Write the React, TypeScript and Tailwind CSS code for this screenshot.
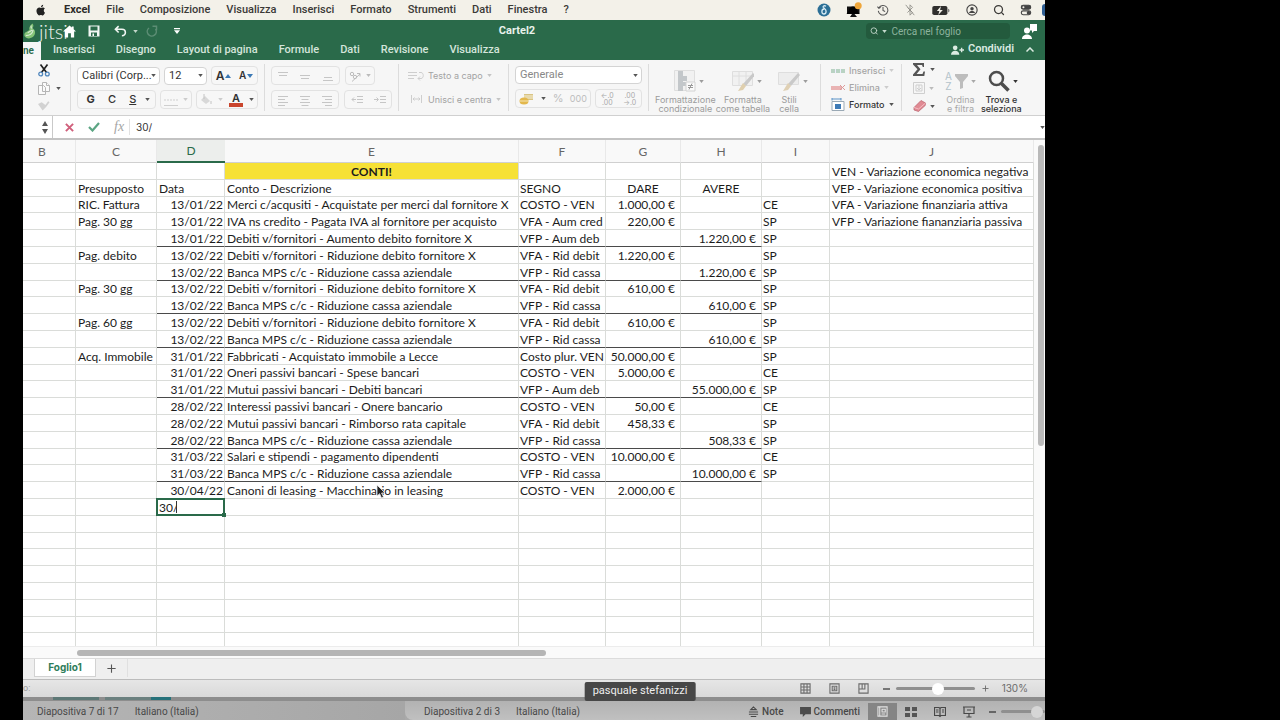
import type { ReactNode } from "react";
import { Search } from "lucide-react";

type Cells = [string, string, string, string, string, string, string, string];

const ROWS: Cells[] = [
  ["", "", "CONTI!", "", "", "", "", "VEN - Variazione economica negativa"],
  ["Presupposto", "Data", "Conto - Descrizione", "SEGNO", "DARE", "AVERE", "", "VEP - Variazione economica positiva"],
  ["RIC. Fattura", "13/01/22", "Merci c/acqusiti - Acquistate per merci dal fornitore X", "COSTO - VEN", "1.000,00 €", "", "CE", "VFA - Variazione finanziaria attiva"],
  ["Pag. 30 gg", "13/01/22", "IVA ns credito - Pagata IVA al fornitore per acquisto", "VFA - Aum cred", "220,00 €", "", "SP", "VFP - Variazione fiananziaria passiva"],
  ["", "13/01/22", "Debiti v/fornitori - Aumento debito fornitore X", "VFP - Aum deb", "", "1.220,00 €", "SP", ""],
  ["Pag. debito", "13/02/22", "Debiti v/fornitori - Riduzione debito fornitore X", "VFA - Rid debit", "1.220,00 €", "", "SP", ""],
  ["", "13/02/22", "Banca MPS c/c - Riduzione cassa aziendale", "VFP - Rid cassa", "", "1.220,00 €", "SP", ""],
  ["Pag. 30 gg", "13/02/22", "Debiti v/fornitori - Riduzione debito fornitore X", "VFA - Rid debit", "610,00 €", "", "SP", ""],
  ["", "13/02/22", "Banca MPS c/c - Riduzione cassa aziendale", "VFP - Rid cassa", "", "610,00 €", "SP", ""],
  ["Pag. 60 gg", "13/02/22", "Debiti v/fornitori - Riduzione debito fornitore X", "VFA - Rid debit", "610,00 €", "", "SP", ""],
  ["", "13/02/22", "Banca MPS c/c - Riduzione cassa aziendale", "VFP - Rid cassa", "", "610,00 €", "SP", ""],
  ["Acq. Immobile", "31/01/22", "Fabbricati - Acquistato immobile a Lecce", "Costo plur. VEN", "50.000,00 €", "", "SP", ""],
  ["", "31/01/22", "Oneri passivi bancari - Spese bancari", "COSTO - VEN", "5.000,00 €", "", "CE", ""],
  ["", "31/01/22", "Mutui passivi bancari - Debiti bancari", "VFP - Aum deb", "", "55.000,00 €", "SP", ""],
  ["", "28/02/22", "Interessi passivi bancari - Onere bancario", "COSTO - VEN", "50,00 €", "", "CE", ""],
  ["", "28/02/22", "Mutui passivi bancari - Rimborso rata capitale", "VFA - Rid debit", "458,33 €", "", "SP", ""],
  ["", "28/02/22", "Banca MPS c/c - Riduzione cassa aziendale", "VFP - Rid cassa", "", "508,33 €", "SP", ""],
  ["", "31/03/22", "Salari e stipendi - pagamento dipendenti", "COSTO - VEN", "10.000,00 €", "", "CE", ""],
  ["", "31/03/22", "Banca MPS c/c - Riduzione cassa aziendale", "VFP - Rid cassa", "", "10.000,00 €", "SP", ""],
  ["", "30/04/22", "Canoni di leasing - Macchinario in leasing", "COSTO - VEN", "2.000,00 €", "", "", ""],
];
const RULED = new Set([4, 6, 8, 10, 13, 16, 18]);
const EMPTY: Cells = ["", "", "", "", "", "", "", ""];
const ALL_ROWS: Cells[] = [...ROWS, ...Array.from({ length: 9 }, () => EMPTY)];
const ACTIVE_ROW = 20;
const POINTER_ROW = 19;

function Caret({ className = "text-[#555]" }: { className?: string }) {
  return (
    <svg viewBox="0 0 6 4" className={`h-[3px] w-[5px] shrink-0 ${className}`} aria-hidden="true">
      <path d="M0 0h6L3 4z" fill="currentColor" />
    </svg>
  );
}

function Picker({ label, value, className }: { label: string; value: string; className: string }) {
  return (
    <label className={`relative flex h-[18px] items-center rounded-sm border border-[#d4d4d4] bg-white font-[Roboto,sans-serif] ${className}`}>
      <select aria-label={label} className="h-full w-full appearance-none bg-transparent pl-1 outline-none">
        <option>{value}</option>
      </select>
      <span className="pointer-events-none absolute right-[3px]">
        <Caret />
      </span>
    </label>
  );
}

function Box({ children, className = "" }: { children: ReactNode; className?: string }) {
  return (
    <div className={`flex h-[19px] items-center justify-around rounded-sm border border-[#e2e2e2] bg-[#f7f7f7] ${className}`}>
      {children}
    </div>
  );
}

function IconButton({ label, children, className = "" }: { label: string; children: ReactNode; className?: string }) {
  return (
    <button type="button" aria-label={label} className={`flex items-center justify-center ${className}`}>
      {children}
    </button>
  );
}

function Lines({ d }: { d: string }) {
  return (
    <svg viewBox="0 0 12 12" className="size-3 text-[#c6c6c6]" fill="none" stroke="currentColor" aria-hidden="true">
      <path d={d} />
    </svg>
  );
}

function Separator() {
  return <div className="my-1 w-px shrink-0 bg-[#dcdcdc]" />;
}

function MacBar() {
  const menus = ["File", "Composizione", "Visualizza", "Inserisci", "Formato", "Strumenti", "Dati", "Finestra", "?"];
  return (
    <div className="flex h-5 shrink-0 items-center overflow-hidden bg-[#f3f1e9] pl-3 text-[11px] text-[#3b3a37]">
      <svg viewBox="0 0 24 24" className="mr-[17px] size-3 shrink-0 fill-[#222]" role="img" aria-label="Apple">
        <path d="M17.6 12.8c0-2.6 2.100-3.900 2.200-3.900-1.200-1.800-3.100-2-3.700-2-1.600-.2-3.100.9-3.900.9s-2-.9-3.300-.9C5.500 7 2.900 9.400 2.900 13.400c0 2.400.9 5 2.100 6.700 1.100 1.600 2 2.900 3.400 2.900 1.300-.1 1.800-.9 3.400-.9 1.600 0 2.100.9 3.500.9 1.400 0 2.300-1.300 3.300-2.800 1-1.500 1.400-3 1.400-3.100-.1 0-2.400-1-2.400-4.300zM15.200 5c.7-.9 1.200-2.100 1.100-3.400-1.100.1-2.300.7-3.100 1.600-.7.800-1.300 2-1.100 3.200 1.200.1 2.400-.6 3.100-1.400z" />
      </svg>
      <nav className="flex items-center gap-4 font-medium">
        <button type="button" className="font-bold text-[#2c2b29]">Excel</button>
        {menus.map((m) => (
          <button type="button" key={m}>{m}</button>
        ))}
      </nav>
      <div className="ml-auto flex items-center gap-[15px]">
        <svg viewBox="0 0 14 14" className="size-[14px]" aria-hidden="true">
          <circle cx="7" cy="7" r="6.500" fill="#2b6f96" />
          <path d="M9 3.200C7.500 2.200 5.700 3 6.200 4.300c.5 1 2.900 1.800 2.900 4C9.100 9.900 8.200 11 7 11S4.900 9.900 4.900 8.500 5.900 6 7.200 6" fill="none" stroke="#d7ecf5" strokeWidth="1.300" />
        </svg>
        <svg viewBox="0 0 16 16" className="size-4" aria-hidden="true">
          <path d="M1 4.500h12.500V12H1zM6 12h2.500l2.500 3H4z" fill="#111" />
          <path d="M.5 12C3 10 2.500 4.500 7 4.500s4 5.500 6.500 7.500z" fill="#000" />
          <circle cx="12.200" cy="3.800" r="3.500" fill="#efa63a" />
        </svg>
        <svg viewBox="0 0 14 14" className="size-3 text-[#555]" fill="none" stroke="currentColor" strokeWidth="1.200" aria-hidden="true">
          <path d="M2.200 4.500A5.600 5.600 0 1 1 1.500 8M.5 3l1.700 2 2-1.200M7 3.500V7.500l2.500 1.200" />
        </svg>
        <svg viewBox="0 0 14 14" className="size-3 text-[#8d8c87]" fill="none" stroke="currentColor" aria-hidden="true">
          <path d="M4 4l6 6-3 3V1l3 3-6 6M2 1l10 12" />
        </svg>
        <svg viewBox="0 0 20 12" className="h-[11px] w-5" aria-hidden="true">
          <rect x=".5" y="1" width="16.500" height="10" rx="2" fill="#2f2f2d" />
          <path d="M18 4v4c1.500-.3 1.500-3.700 0-4z" fill="#555" />
          <path d="M10 1L5.500 6.500h2.700L7 11l5-5.500H9z" fill="#f3f1e9" />
        </svg>
        <svg viewBox="0 0 14 14" className="size-3 text-[#444]" fill="none" stroke="currentColor" strokeWidth="1.300" aria-hidden="true">
          <circle cx="7" cy="7" r="6" />
          <circle cx="7" cy="5.500" r="2" fill="currentColor" stroke="none" />
          <path d="M3.500 10.500c.5-3 6.500-3 7 0z" fill="currentColor" stroke="none" />
        </svg>
        <Search className="size-3 text-[#3b3a37]" strokeWidth={2.500} />
        <svg viewBox="0 0 14 14" className="size-3 text-[#444]" fill="none" stroke="currentColor" strokeWidth="1.300" aria-hidden="true">
          <rect x="1.500" y="1.500" width="11" height="4.500" rx="2.200" fill="currentColor" />
          <circle cx="4" cy="3.700" r="1.200" fill="#f3f1e9" stroke="none" />
          <rect x="1.500" y="8" width="11" height="4.500" rx="2.200" />
          <circle cx="10" cy="10.200" r="1.500" fill="currentColor" />
        </svg>
        <span className="-ml-[5px] h-3 w-[3px] rounded-l-full bg-[#2f5f94]" />
      </div>
    </div>
  );
}

function TitleBar() {
  const tabs = ["Inserisci", "Disegno", "Layout di pagina", "Formule", "Dati", "Revisione", "Visualizza"];
  return (
    <header className="shrink-0 bg-[#2a6a4a] text-white">
      <div className="grid h-[22px] grid-cols-[14fr_auto_15fr] items-center">
        <div className="flex items-center pl-10">
          <svg viewBox="0 0 14 14" className="mr-3 size-[13px]" aria-hidden="true">
            <path d="M7 .5L0 7h2v6.500h3.500V9h3v4.500H12V7h2l-2.500-2.400V1.500h-2v1.300z" fill="#fff" />
          </svg>
          <svg viewBox="0 0 12 12" className="mr-[14px] size-3" aria-hidden="true">
            <path d="M.5.5h11v11H.5z" fill="#f2f7f4" />
            <path d="M2.500 1.500h7v4h-7zM3 7.500h6V11H3z" fill="#2a6a4a" />
            <path d="M4.500 8.500h1.500V11H4.500z" fill="#fff" />
          </svg>
          <svg viewBox="0 0 14 12" className="mr-[6px] h-3 w-[13px]" fill="none" stroke="#f2f7f4" strokeWidth="1.700" aria-hidden="true">
            <path d="M5 .8L1.500 4.200 5 7.600M2 4.200h6.500c5 0 5 7 0 7" />
          </svg>
          <Caret className="text-[#c2d6ca]" />
          <svg viewBox="0 0 12 12" className="mr-4 ml-2 size-3" fill="none" stroke="#5c8d74" strokeWidth="1.500" aria-hidden="true">
            <path d="M3 3a4.500 4.500 0 1 0 6.500 1M6.500 1.200h4v4" />
          </svg>
          <svg viewBox="0 0 6 6" className="size-[6px]" aria-hidden="true">
            <path d="M0 0h6v1.200H0zM0 2.200h6L3 6z" fill="#fff" />
          </svg>
        </div>
        <h1 className="text-[11px] font-bold text-[#e9f2ec]">Cartel2</h1>
        <div className="flex items-center justify-end gap-3 pr-2">
          <label className="flex h-4 w-36 items-center gap-1 rounded-sm bg-[#235a3d] pl-1">
            <Search className="size-[10px] text-[#c5dacd]" strokeWidth={2.500} />
            <Caret className="text-[#c5dacd]" />
            <input
              aria-label="Cerca nel foglio"
              placeholder="Cerca nel foglio"
              className="w-full min-w-0 bg-transparent text-[10px] outline-none placeholder:text-[#8db39d]"
            />
          </label>
          <svg viewBox="0 0 15 15" className="size-[15px]" aria-hidden="true">
            <circle cx="5" cy="6.500" r="3" fill="#fff" />
            <path d="M0 15c0-6 10-6 10 0zM8 0h7v7h-3l-2 2V6.500H8z" fill="#fff" />
          </svg>
        </div>
      </div>
      <div className="flex h-[18px] items-end text-[11px]">
        <button type="button" aria-label="Home" className="flex h-[18px] w-[18px] items-center bg-[#f6f6f6] pb-[2px] text-[10px] font-semibold text-[#2a6a4a]">
          ne
        </button>
        <nav className="ml-3 flex h-full items-center gap-[21px] pb-px font-medium text-[#d4e5db]">
          {tabs.map((t) => (
            <button type="button" key={t}>{t}</button>
          ))}
        </nav>
        <div className="ml-auto flex h-full items-center gap-3 pr-[11px] pb-[3px] text-[#dcebe2]">
          <button type="button" className="flex items-center gap-1 font-semibold">
            <svg viewBox="0 0 14 10" className="h-[10px] w-[13px]" aria-hidden="true">
              <circle cx="4.500" cy="2.700" r="2.500" fill="currentColor" />
              <path d="M0 10c0-5.500 9-5.500 9 0zM9 4.300h5v1.500H9zM10.700 2.500h1.500v5h-1.500z" fill="currentColor" />
            </svg>
            Condividi
          </button>
          <svg viewBox="0 0 8 5" className="h-[5px] w-2" fill="none" stroke="currentColor" strokeWidth="1.500" aria-hidden="true">
            <path d="M.5 4.500L4 1l3.500 3.500" />
          </svg>
        </div>
      </div>
    </header>
  );
}

function BigButton({ lines, children, className = "", iconClassName = "pl-2" }: { lines: [string, string]; children: ReactNode; className?: string; iconClassName?: string }) {
  return (
    <button type="button" className={`flex shrink-0 flex-col items-center pt-[3px] text-[9px] leading-[9px] ${className}`}>
      <span className={`flex h-7 items-center gap-[3px] ${iconClassName}`}>
        {children}
        <Caret className="text-current" />
      </span>
      <span>{lines[0]}</span>
      <span>{lines[1]}</span>
    </button>
  );
}

function Ribbon() {
  return (
    <div className="flex h-14 shrink-0 overflow-hidden border-b border-[#d0d0d0] bg-[#f6f6f6] font-[Inter,sans-serif] text-[11px] text-[#333]">
      <div className="flex w-[47px] shrink-0 flex-col justify-between py-1 pl-[15px]">
        <IconButton label="Taglia" className="w-3">
          <svg viewBox="0 0 12 13" className="h-[13px] w-3" fill="none" aria-hidden="true">
            <path d="M2.500.5l6 8M9.500.5l-6 8" stroke="#222" strokeWidth="1.700" />
            <circle cx="2.700" cy="10" r="1.900" stroke="#4f86bd" strokeWidth="1.300" />
            <circle cx="9.300" cy="10" r="1.900" stroke="#4f86bd" strokeWidth="1.300" />
          </svg>
        </IconButton>
        <IconButton label="Copia" className="gap-[6px] self-start">
          <svg viewBox="0 0 12 13" className="h-[13px] w-3" fill="#fafafa" stroke="#b5b5b5" aria-hidden="true">
            <path d="M.5 3.500h5l2 2v7h-7zM4.500.5h4l3 3v6h-7z" />
            <path d="M8.500.5v3h3" />
          </svg>
          <Caret />
        </IconButton>
        <IconButton label="Copia formato" className="w-3">
          <svg viewBox="0 0 13 12" className="h-3 w-3" aria-hidden="true">
            <path d="M0 5l4-2 4 3 3-4 1.500 1L9 8l-4 4z" fill="#d2d2d2" />
          </svg>
        </IconButton>
      </div>
      <Separator />
      <div className="flex w-[193px] shrink-0 flex-col gap-[5px] py-[6px] pl-[6px] pr-[6px]">
        <div className="flex items-center gap-1">
          <Picker label="Carattere" value="Calibri (Corp..." className="w-[83px]" />
          <Picker label="Dimensione" value="12" className="w-[43px]" />
          <Box className="flex-1 font-semibold">
            <IconButton label="Aumenta dimensione" className="gap-px">
              <span className="text-xs">A</span>
              <svg viewBox="0 0 6 4" className="h-1 w-[6px]" aria-hidden="true"><path d="M0 4h6L3 0z" fill="#3a78b5" /></svg>
            </IconButton>
            <IconButton label="Riduci dimensione" className="gap-px">
              <span className="text-[10px]">A</span>
              <svg viewBox="0 0 6 4" className="h-1 w-[6px]" aria-hidden="true"><path d="M0 0h6L3 4z" fill="#3a78b5" /></svg>
            </IconButton>
          </Box>
        </div>
        <div className="flex items-center gap-1">
          <Box className="w-[79px] pl-1">
            <button type="button" className="font-bold">G</button>
            <button type="button" className="ml-1 font-medium">C</button>
            <button type="button" className="ml-1 font-medium underline">S</button>
            <Caret />
          </Box>
          <Box className="w-8">
            <svg viewBox="0 0 14 12" className="h-3 w-[14px]" fill="none" stroke="#cfcfcf" aria-hidden="true"><path d="M0 6h14" strokeDasharray="2 1" /><path d="M0 11.500h14" /></svg>
            <Caret className="text-[#ccc]" />
          </Box>
          <Box className="flex-1">
            <svg viewBox="0 0 12 12" className="size-3" aria-hidden="true"><path d="M1 6l4-4 5 5-4 3z" fill="#d8d8d8" /><path d="M4 0v5M11 7v3" stroke="#c4c4c4" /></svg>
            <Caret className="text-[#ccc]" />
            <IconButton label="Colore carattere" className="flex-col">
              <span className="text-[11px] leading-[10px] font-semibold">A</span>
              <span className="h-1 w-[14px] bg-[#c9452d]" />
            </IconButton>
            <Caret />
          </Box>
        </div>
      </div>
      <Separator />
      <div className="flex w-[133px] shrink-0 flex-col gap-[5px] py-[6px] pl-[6px] pr-[6px]">
        <div className="flex gap-[5px]">
          <Box className="w-[69px]">
            <Lines d="M1 2.500h10M2 5.500h8" />
            <Lines d="M1 5.500h10M2 8.500h8" />
            <Lines d="M2 7.500h8M1 10.500h10" />
          </Box>
          <Box className="w-[30px]">
            <svg viewBox="0 0 12 12" className="size-3" fill="none" stroke="#bdbdbd" aria-hidden="true"><path d="M3 11.500L11 4M8 3.500h3v3" /><circle cx="3" cy="4" r="1.700" /><circle cx="6" cy="7" r="1.700" /></svg>
            <Caret className="text-[#bbb]" />
          </Box>
        </div>
        <div className="flex gap-[5px]">
          <Box className="w-[69px]">
            <Lines d="M1 2.500h10M1 5.500h7M1 8.500h10M1 11.500h7" />
            <Lines d="M1 2.500h10M2.500 5.500h7M1 8.500h10M2.500 11.500h7" />
            <Lines d="M1 2.500h10M4 5.500h7M1 8.500h10M4 11.500h7" />
          </Box>
          <Box className="w-12">
            <Lines d="M6 2.500h6M6 5.500h6M6 8.500h6M5 5.500H1M3 3.500L1 5.500l2 2" />
            <Lines d="M6 2.500h6M6 5.500h6M6 8.500h6M0 5.500h4M2.500 3.500l2 2-2 2" />
          </Box>
        </div>
      </div>
      <Separator />
      <div className="flex w-[109px] shrink-0 flex-col justify-around py-1 pl-[9px] text-[9px] text-[#a3a3a3]">
        <button type="button" className="flex items-center gap-1">
          <svg viewBox="0 0 16 10" className="h-[10px] w-4" fill="none" stroke="#cecece" aria-hidden="true"><path d="M0 1.500h9M0 4.500h9M0 7.500h6M11 1.500h2c3 0 3 6 0 6h-3M12 5.500l-2 2 2 2" /></svg>
          Testo a capo
          <Caret className="text-[#c4c4c4]" />
        </button>
        <button type="button" className="flex items-center gap-1">
          <svg viewBox="0 0 16 10" className="h-[10px] w-4" fill="none" stroke="#cecece" aria-hidden="true"><path d="M3.500 1v8M13.500 1v8M5 5h7M6.500 3.500L5 5l1.500 1.500M10.500 3.500L12 5l-1.500 1.500" /></svg>
          Unisci e centra
          <Caret className="text-[#c4c4c4]" />
        </button>
      </div>
      <Separator />
      <div className="flex w-[139px] shrink-0 flex-col gap-[5px] py-[6px] pl-[6px] pr-[6px] text-[#888]">
        <Picker label="Formato numero" value="Generale" className="w-full" />
        <div className="flex gap-1">
          <Box className="w-[76px]">
            <svg viewBox="0 0 16 12" className="h-3 w-4" aria-hidden="true"><path d="M5 1h9v6H5z" fill="#d9c483" /><path d="M5 3h9M5 5h9" stroke="#f7f0d8" /><ellipse cx="5" cy="8" rx="4.500" ry="3.500" fill="#e3b84d" /><path d="M1 8h8" stroke="#f6e6b5" /></svg>
            <Caret />
            <button type="button" className="text-[#bdbdbd]">%</button>
            <button type="button" className="text-[9px] text-[#bdbdbd]">000</button>
          </Box>
          <Box className="flex-1 text-[7px] leading-[7px] text-[#a9a9a9]">
            <button type="button">←.0<br />.00</button>
            <button type="button">.00<br />→.0</button>
          </Box>
        </div>
      </div>
      <Separator />
      <div className="flex w-[171px] shrink-0 items-start justify-between pt-1 pl-[6px] pr-[14px] text-[#9c9c9c]">
        <BigButton lines={["Formattazione", "condizionale"]}>
          <svg viewBox="0 0 22 22" className="size-[22px]" aria-hidden="true">
            <path d="M.5.500h20v20H.500z" fill="#f1f1f1" stroke="#dedede" />
            <path d="M4 1h5v20H4zM9 6h4v5H9zM9 12h7v4H9z" fill="#c3c7ca" />
            <path d="M12 12h9v9h-9z" fill="#fafafa" stroke="#d2d2d2" />
            <path d="M14 15.500h5M14 17.500h5M18 13.500l-3 6" stroke="#999" />
          </svg>
        </BigButton>
        <BigButton lines={["Formatta", "come tabella"]}>
          <svg viewBox="0 0 22 22" className="size-[22px]" aria-hidden="true">
            <path d="M.5 1.500h20v14H.500zM.5 6h20M7 2v13M14 2v13" fill="#f1f1f1" stroke="#dedede" />
            <path d="M21 3l2 2-9 11-3-2z" fill="#c9c9c9" />
            <path d="M11 13l3 3-3 4-5 1z" fill="#dfcfae" />
          </svg>
        </BigButton>
        <BigButton lines={["Stili", "cella"]}>
          <svg viewBox="0 0 22 22" className="size-[22px]" aria-hidden="true">
            <path d="M.5 2.500h20v12H.500z" fill="#ededed" stroke="#dedede" />
            <path d="M20 3l2 2-9 11-3-2z" fill="#c9c9c9" />
            <path d="M10 13l3 3-3 4-5 1z" fill="#dfd0b4" />
          </svg>
        </BigButton>
      </div>
      <Separator />
      <div className="flex w-20 shrink-0 flex-col justify-between py-1 pl-[10px] text-[9px] font-medium text-[#a5a5a5]">
        <button type="button" className="flex items-center gap-1">
          <svg viewBox="0 0 14 8" className="h-2 w-[14px]" aria-hidden="true"><path d="M0 2h14v4H0z" fill="#b9d3c3" /><path d="M4.500 2v4M9.500 2v4" stroke="#eef" /></svg>
          Inserisci
          <Caret className="text-[#ccc]" />
        </button>
        <button type="button" className="flex items-center gap-1">
          <svg viewBox="0 0 14 8" className="h-2 w-[14px]" aria-hidden="true"><path d="M0 2h11v4H0z" fill="#e9b3b3" /><path d="M9 1l5 5M14 1L9 6" stroke="#d99" /></svg>
          Elimina
          <Caret className="text-[#ccc]" />
        </button>
        <button type="button" className="flex items-center gap-1 text-[#333]">
          <svg viewBox="0 0 14 13" className="h-[13px] w-[14px]" aria-hidden="true"><path d="M1 3.500h12v9H1z" fill="#fff" stroke="#9aa9b5" /><path d="M4 6h6v5H4z" fill="#3f7bb6" /><path d="M1 1h9M1 0v2.500M10 0v2.500" stroke="#5b93c7" /></svg>
          Formato
          <Caret />
        </button>
      </div>
      <Separator />
      <div className="flex w-10 shrink-0 flex-col items-start justify-between py-[3px] pl-[11px]">
        <IconButton label="Somma automatica" className="gap-[5px]">
          <svg viewBox="0 0 12 13" className="h-[13px] w-3" aria-hidden="true"><path d="M0 0h11v4h-1.200L9 2H4l3.500 4.200L3.600 11H9.500l1-2.500H12L11.300 13H0v-1.500L4.500 6.300 0 1.500z" fill="#555" /></svg>
          <Caret />
        </IconButton>
        <IconButton label="Riempimento" className="gap-1">
          <svg viewBox="0 0 12 12" className="h-3 w-3" fill="none" stroke="#cfcfcf" aria-hidden="true"><path d="M.5.5h11v11H.500zM3 3h6v6H3zM6 3v5M4 6l2 2 2-2" /></svg>
          <Caret className="text-[#bbb]" />
        </IconButton>
        <IconButton label="Cancella" className="gap-1">
          <svg viewBox="0 0 13 12" className="h-3 w-[13px]" aria-hidden="true"><path d="M1 7.500L8 .5l4.500 2.500-.3 2.500L5.500 11.500 1 10z" fill="#e08a93" stroke="#b9606b" strokeWidth=".7" /><path d="M1 7.500L5.500 9l7-6" fill="none" stroke="#f5bcc2" /></svg>
          <Caret />
        </IconButton>
      </div>
      <div className="flex shrink-0 items-start gap-[5px] pt-1 pl-[3px]">
        <BigButton lines={["Ordina", "e filtra"]} className="text-[#a8a8a8]" iconClassName="pl-0">
          <span className="flex flex-col text-[10px] leading-[10px] text-[#b3c3cb]">
            <span>A</span>
            <span>Z</span>
          </span>
          <svg viewBox="0 0 13 15" className="h-[15px] w-[13px]" aria-hidden="true"><path d="M0 0h13v2L8 8v6l-3 1V8L0 2z" fill="#bdbdbd" /></svg>
        </BigButton>
        <BigButton lines={["Trova e", "seleziona"]} className="font-medium text-[#333]" iconClassName="pl-1">
          <svg viewBox="0 0 22 22" className="size-[22px]" fill="none" stroke="#4d4d4d" aria-hidden="true"><circle cx="8.500" cy="8.500" r="6.500" strokeWidth="2.500" /><path d="M13.500 13.500l7 7" strokeWidth="3.500" /></svg>
        </BigButton>
      </div>
    </div>
  );
}

function FormulaBar() {
  return (
    <div className="flex h-6 shrink-0 items-center border-b-2 border-[#c3c3c3] bg-white text-[11px]">
      <div className="flex h-full w-[30px] flex-col items-end justify-center gap-[3px] border-r border-[#c9c9c9] pr-1">
        <svg viewBox="0 0 6 5" className="h-[5px] w-[6px]" aria-hidden="true"><path d="M0 5h6L3 0z" fill="#555" /></svg>
        <svg viewBox="0 0 6 5" className="h-[5px] w-[6px]" aria-hidden="true"><path d="M0 0h6L3 5z" fill="#555" /></svg>
      </div>
      <IconButton label="Annulla" className="ml-3">
        <svg viewBox="0 0 10 10" className="size-[9px]" stroke="#d0607c" strokeWidth="2.200" aria-hidden="true"><path d="M1 1l8 8M9 1L1 9" /></svg>
      </IconButton>
      <IconButton label="Invio" className="ml-[14px]">
        <svg viewBox="0 0 12 10" className="h-[10px] w-3" fill="none" stroke="#5ba583" strokeWidth="2.200" aria-hidden="true"><path d="M1 5l3.500 3.500L11 1" /></svg>
      </IconButton>
      <span className="ml-[14px] border-r border-[#e2e2e2] pr-[5px] font-['Liberation_Serif',serif] text-sm leading-4 text-[#a5a5a5] italic">fx</span>
      <input aria-label="Barra della formula" defaultValue="30/" className="ml-[6px] min-w-0 flex-1 bg-transparent font-[Inter,sans-serif] text-[10px] text-[#333] outline-none" />
      <Caret />
    </div>
  );
}

const COLUMNS = ["B", "C", "D", "E", "F", "G", "H", "I", "J"];
const COL_WIDTHS = ["w-[53px] pr-[14px]", "w-[81px]", "w-[68px]", "w-[294px]", "w-[87px]", "w-[75px]", "w-[81px]", "w-[68px]", ""];

function cellClass(row: number, col: number) {
  const classes = ["border-r border-b py-0 whitespace-nowrap border-r-[#dadcd9]"];
  classes.push(RULED.has(row) && col >= 1 && col <= 5 ? "border-b-[#4a4a4a]" : "border-b-[#dadcd9]");
  if (row === 0 && col === 2) classes.push("bg-[#f6e136] px-0 text-center font-bold");
  else if (row === 1 && (col === 4 || col === 5)) classes.push("px-0 text-center");
  else if (row > 1 && col === 1) classes.push("pr-px pl-0 text-right");
  else if (col === 4 || col === 5) classes.push("pr-[5px] pl-0 text-right");
  else if (col === 3 || col === 6) classes.push("pr-0 pl-px");
  else classes.push("pr-0 pl-[2px]");
  return classes.join(" ");
}

function ActiveCell() {
  return (
    <td className="relative border-r border-b border-[#dadcd9] p-0">
      <div className="absolute -inset-x-px -inset-y-px flex items-center border-2 border-[#2a6a4a] bg-white">
        <input aria-label="D21" defaultValue="30/" className="w-[18px] bg-transparent pl-px outline-none" />
        <span className="h-3 w-px bg-[#333]" />
        <span className="absolute -right-[3px] -bottom-[3px] size-1 bg-[#2a6a4a]" />
      </div>
    </td>
  );
}

function Pointer() {
  return (
    <svg viewBox="0 0 10 15" className="absolute top-[2px] left-[151px] h-[15px] w-[10px]" aria-hidden="true">
      <path d="M1 1v11l2.600-2.300L5.500 14l2-1-1.900-4H9z" fill="#222" stroke="#eee" strokeWidth=".8" />
    </svg>
  );
}

function Sheet() {
  return (
    <div className="flex min-h-0 flex-1 bg-white">
      <div className="min-w-0 flex-1 overflow-hidden">
        <table className="w-full table-fixed border-separate border-spacing-0 font-[Lato,sans-serif] text-xs leading-[15px] text-[#1c1c1c]">
          <thead>
            <tr className="h-[23px]">
              {COLUMNS.map((c, i) => (
                <th
                  key={c}
                  scope="col"
                  className={`p-0 font-normal ${COL_WIDTHS[i]} ${
                    c === "D"
                      ? "border-b-2 border-[#2a6a4a] bg-[#eceeec] text-[#2a6a4a]"
                      : "border-r border-b border-r-[#e9e9e9] border-b-[#d0d0d0] bg-[#f9f9f9] text-[#666]"
                  }`}
                >
                  {c}
                </th>
              ))}
            </tr>
          </thead>
          <tbody>
            {ALL_ROWS.map((row, r) => (
              <tr key={r} className="h-[17px] nth-[5n+3]:h-4">
                <td className={cellClass(r, -1)} />
                {row.map((text, c) =>
                  r === ACTIVE_ROW && c === 1 ? (
                    <ActiveCell key={c} />
                  ) : r === POINTER_ROW && c === 2 ? (
                    <td key={c} className={`relative ${cellClass(r, c)}`}>
                      {text}
                      <Pointer />
                    </td>
                  ) : (
                    <td key={c} className={cellClass(r, c)}>{text}</td>
                  ),
                )}
              </tr>
            ))}
          </tbody>
        </table>
      </div>
      <div className="flex w-[11px] shrink-0 flex-col items-end bg-[#fafafa] pt-[5px] pr-px">
        <div className="h-3/5 w-[6px] rounded-full bg-[#b9b9b9]" />
      </div>
    </div>
  );
}

function ZoomSlider({ label, value, className }: { label: string; value: number; className: string }) {
  return (
    <input
      type="range"
      aria-label={label}
      defaultValue={value}
      className={`h-[3px] appearance-none rounded-full bg-[#8f8f8f] [&::-webkit-slider-thumb]:size-3 [&::-webkit-slider-thumb]:appearance-none [&::-webkit-slider-thumb]:rounded-full ${className}`}
    />
  );
}

function StatusIcon({ d, className = "size-[11px]" }: { d: string; className?: string }) {
  return (
    <svg viewBox="0 0 12 12" className={`shrink-0 ${className}`} fill="none" stroke="currentColor" strokeWidth="1.200" aria-hidden="true">
      <path d={d} />
    </svg>
  );
}

function Footer() {
  return (
    <>
      <div className="flex h-3 shrink-0 items-center border-t border-[#ececec] bg-[#fafafa] pl-[54px]">
        <div className="h-[6px] w-[469px] rounded-full bg-[#b5b5b5]" />
      </div>
      <div className="flex h-[21px] shrink-0 border-t border-[#dcdcdc] bg-[#efefef] pl-[11px] text-[11px]">
        <button type="button" className="h-[18px] w-[62px] border-x border-b border-[#d2d2d2] bg-white font-[Inter,sans-serif] text-[10px] font-bold text-[#2f7d59]">Foglio1</button>
        <button type="button" aria-label="Nuovo foglio" className="flex h-[18px] w-8 items-center justify-center border-r border-[#e0e0e0] text-[#555]">
          <StatusIcon d="M6 1.500v9M1.500 6h9" />
        </button>
      </div>
      <div className="flex h-[18px] shrink-0 items-center border-t border-[#bcbcbc] bg-gradient-to-b from-[#e6e6e6] to-[#d9d9d9] text-[#6b6b6b]">
        <span className="text-[9px] text-[#999]">o:</span>
        <div className="ml-auto flex items-center pr-[17px]">
          <StatusIcon d="M1 1h10v10H1zM1 4.300h10M1 7.700h10M4.300 1v10M7.700 1v10" />
          <span className="w-[18px]" />
          <StatusIcon d="M1 1h10v10H1zM3.500 3.500h5v5h-5zM5 5.300h2M5 7h2" />
          <span className="w-[18px]" />
          <StatusIcon d="M1 1h10v10H1zM4.500 1v5.500M7.500 1v5.500H1" />
          <span className="ml-[14px] h-[2px] w-[7px] bg-[#777]" />
          <ZoomSlider label="Zoom foglio" value={55} className="mx-[6px] w-[79px] [&::-webkit-slider-thumb]:bg-white" />
          <StatusIcon d="M6 2v8M2 6h8" className="size-[9px]" />
          <span className="ml-3 font-[Inter,sans-serif] text-[10px]">130%</span>
        </div>
      </div>
    </>
  );
}

function SlidesBar() {
  return (
    <div className="flex h-[23px] shrink-0 flex-col overflow-hidden bg-[#a9a9a9] text-[10px] text-[#484848]">
      <div className="flex h-1 shrink-0 items-start bg-[#8d8d8d] pl-[30px]">
        <span className="h-[3px] w-[46px] bg-[#5d7876]" />
        <span className="ml-[6px] h-[3px] w-[46px] bg-[#6b807f]" />
        <span className="h-[3px] w-5 bg-[#26717a]" />
      </div>
      <div className="flex flex-1 items-stretch">
        <div className="flex w-[382px] items-center gap-4 bg-gradient-to-r from-[#b5b5b5] to-[#a6a6a6] pt-[2px] pl-[14px]">
          <span>Diapositiva 7 di 17</span>
          <span>Italiano (Italia)</span>
        </div>
        <div className="flex min-w-0 flex-1 items-center rounded-bl-lg bg-gradient-to-b from-[#b2b2b2] to-[#c0c0c0] pt-[2px] pl-[19px]">
          <span>Diapositiva 2 di 3</span>
          <span className="ml-4">Italiano (Italia)</span>
          <div className="ml-auto flex h-full items-center overflow-hidden font-medium">
            <button type="button" className="flex items-center gap-[3px]">
              <StatusIcon d="M1 6.500h10M1 9h10M3 11.500h6M6 1l-3 3h6z" />
              Note
            </button>
            <button type="button" className="ml-4 flex items-center gap-[3px]">
              <svg viewBox="0 0 12 11" className="h-[10px] w-[11px]" aria-hidden="true"><path d="M0 0h12v8H6l-3 3V8H0z" fill="#4c4c4c" /></svg>
              Commenti
            </button>
            <span className="ml-2 flex h-full w-[29px] items-center justify-center bg-[#858585] text-[#e2e2e2]">
              <StatusIcon d="M1 1h10v10H1zM3 1v10M5.500 3.500h3.500v3H5.500zM5 8.700h4" />
            </span>
            <svg viewBox="0 0 12 10" className="ml-2 h-[10px] w-3 fill-[#555]" aria-hidden="true"><path d="M0 0h5v4H0zM7 0h5v4H7zM0 6h5v4H0zM7 6h5v4H7z" /></svg>
            <span className="w-[17px]" />
            <StatusIcon d="M.5 1.500H5l1 1 1-1h4.500v8H7l-1 1-1-1H.500zM6 2.500v8M2 4h2.500M2 6h2.500M8 4h2M8 6h2" className="size-3" />
            <span className="w-[17px]" />
            <StatusIcon d="M0 1h12M1 1v6.500h10V1M6 7.500V11M3.500 11h5M4 4h4" className="size-3" />
            <span className="ml-[14px] h-[2px] w-[7px] bg-[#666]" />
            <ZoomSlider label="Zoom diapositiva" value={95} className="ml-[5px] w-[44px] [&::-webkit-slider-thumb]:bg-[#d6d6d6]" />
          </div>
        </div>
      </div>
    </div>
  );
}

function JitsiMark() {
  return (
    <div className="absolute top-5 left-6 flex items-center gap-[3px] opacity-90">
      <svg viewBox="0 0 13 18" className="h-[18px] w-3" aria-hidden="true">
        <path d="M9 1c2 2 1 4 0 5 3 1 4 5 2 8-2 3-6 4-9 2-2-1-2-3-1-5l5-3C5 5 7 3 9 1z" fill="#8fce7d" />
        <path d="M2 14c4 0 7-2 8-6M4 11l5-3M8 3c-1 2 0 3 1 3" fill="none" stroke="#e9f7e3" strokeWidth="1.200" />
      </svg>
      <span className="font-[Lato,sans-serif] text-xl leading-[22px] font-light text-white">jitsi</span>
    </div>
  );
}

export default function App() {
  return (
    <div className="relative h-screen overflow-hidden bg-black pr-[235px] pl-[23px] font-[Roboto,sans-serif]">
      <main className="flex h-full flex-col overflow-hidden">
        <MacBar />
        <TitleBar />
        <Ribbon />
        <FormulaBar />
        <Sheet />
        <Footer />
        <SlidesBar />
      </main>
      <JitsiMark />
      <div className="absolute bottom-[19px] left-1/2 flex h-[19px] -translate-x-1/2 items-center rounded-xs bg-[#474747] px-2 text-[11px] text-[#eee]">
        pasquale stefanizzi
      </div>
    </div>
  );
}
